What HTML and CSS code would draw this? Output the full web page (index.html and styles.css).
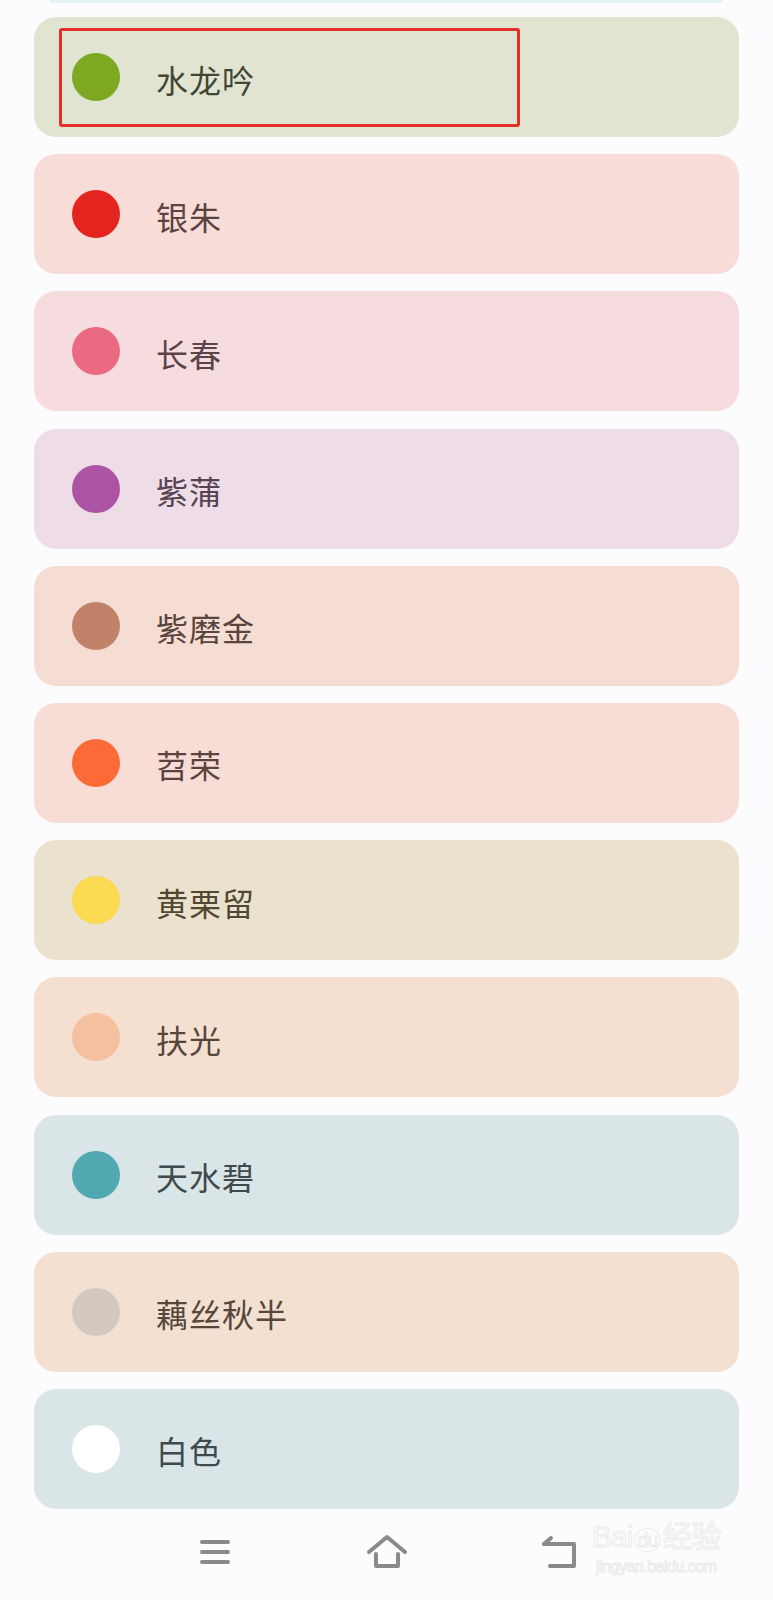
FILE: index.html
```html
<!DOCTYPE html>
<html lang="zh-CN">
<head>
    <meta charset="UTF-8">
    <meta name="viewport" content="width=device-width, initial-scale=1.0">
    <title>颜色列表</title>
    <link rel="stylesheet" href="styles.css">
</head>
<body>
    <div class="prev-edge"></div>

    <div class="list">
        <div class="item c-shuilongyin">
            <span class="dot"></span>
            <span class="name">水龙吟</span>
            <div class="highlight"></div>
        </div>
        <div class="item c-yinzhu">
            <span class="dot"></span>
            <span class="name">银朱</span>
        </div>
        <div class="item c-changchun">
            <span class="dot"></span>
            <span class="name">长春</span>
        </div>
        <div class="item c-zipu">
            <span class="dot"></span>
            <span class="name">紫蒲</span>
        </div>
        <div class="item c-zimojin">
            <span class="dot"></span>
            <span class="name">紫磨金</span>
        </div>
        <div class="item c-tiaorong">
            <span class="dot"></span>
            <span class="name">苕荣</span>
        </div>
        <div class="item c-huangliliu">
            <span class="dot"></span>
            <span class="name">黄栗留</span>
        </div>
        <div class="item c-fuguang">
            <span class="dot"></span>
            <span class="name">扶光</span>
        </div>
        <div class="item c-tianshuibi">
            <span class="dot"></span>
            <span class="name">天水碧</span>
        </div>
        <div class="item c-ousiqiuban">
            <span class="dot"></span>
            <span class="name">藕丝秋半</span>
        </div>
        <div class="item c-white">
            <span class="dot"></span>
            <span class="name">白色</span>
        </div>
    </div>

    <div class="navbar">
        <div class="nav-btn">
            <svg width="32" height="28" viewBox="0 0 32 28">
                <path d="M3 4 H29 M3 14 H29 M3 24 H29" fill="none" stroke="#8a8a8c" stroke-width="4" stroke-linecap="round"/>
            </svg>
        </div>
        <div class="nav-btn">
            <svg width="42" height="36" viewBox="0 0 42 36">
                <path d="M3 18 L21 3 L39 18" fill="none" stroke="#8a8a8c" stroke-width="4" stroke-linecap="round" stroke-linejoin="round"/>
                <path d="M10 20 V32 H32 V20" fill="none" stroke="#8a8a8c" stroke-width="4" stroke-linecap="round" stroke-linejoin="round"/>
            </svg>
        </div>
        <div class="nav-btn">
            <svg width="38" height="34" viewBox="0 0 38 34">
                <path d="M4 9 H34 V31 H10" fill="none" stroke="#8a8a8c" stroke-width="4" stroke-linecap="round" stroke-linejoin="round"/>
                <path d="M4 9 L11 3" fill="none" stroke="#8a8a8c" stroke-width="4" stroke-linecap="round"/>
            </svg>
        </div>
        <div class="watermark">
            <div class="wm-logo">Bai<span class="wm-paw">du</span>经验</div>
            <div class="wm-url">jingyan.baidu.com</div>
        </div>
    </div>
</body>
</html>
```

FILE: styles.css
```css
body {
    margin: 0;
    background: #fcfcfe;
    font-family: "Noto Sans CJK SC", "Noto Sans", sans-serif;
    height: 1600px;
    overflow: hidden;
}
.prev-edge {
    height: 3px;
    margin: 0 50px;
    background: #e3f2f2;
    border-radius: 0 0 12px 12px;
}
.list {
    display: flex;
    flex-direction: column;
    gap: 17.2px;
    padding: 14px 34px 0;
}
.item {
    position: relative;
    display: flex;
    align-items: center;
    height: 120px;
    padding-left: 38px;
    border-radius: 22px;
}
.dot {
    width: 48px;
    height: 48px;
    border-radius: 50%;
    flex-shrink: 0;
}
.name {
    margin-left: 36px;
    font-size: 32px;
    line-height: 1;
    padding-top: 3px;
    letter-spacing: 1px;
}
.highlight {
    position: absolute;
    left: 25px;
    top: 11px;
    width: 455px;
    height: 93px;
    border: 3px solid #e5302a;
    border-radius: 3px;
}

.c-shuilongyin { background: #e2e4d2; }
.c-shuilongyin .dot { background: #7da821; }
.c-shuilongyin .name { color: #434633; }

.c-yinzhu { background: #f8dcd8; }
.c-yinzhu .dot { background: #e3241f; }
.c-yinzhu .name { color: #5b4340; }

.c-changchun { background: #f6dcde; }
.c-changchun .dot { background: #ea6a82; }
.c-changchun .name { color: #5b4448; }

.c-zipu { background: #eedde7; }
.c-zipu .dot { background: #ad53a4; }
.c-zipu .name { color: #574453; }

.c-zimojin { background: #f6ddd4; }
.c-zimojin .dot { background: #c0836a; }
.c-zimojin .name { color: #5a443c; }

.c-tiaorong { background: #f7ddd6; }
.c-tiaorong .dot { background: #fc6b37; }
.c-tiaorong .name { color: #5b443d; }

.c-huangliliu { background: #ebe2cd; }
.c-huangliliu .dot { background: #fcda51; }
.c-huangliliu .name { color: #514733; }

.c-fuguang { background: #f4dfd1; }
.c-fuguang .dot { background: #f5c09f; }
.c-fuguang .name { color: #57453a; }

.c-tianshuibi { background: #d9e5e6; }
.c-tianshuibi .dot { background: #51a8b0; }
.c-tianshuibi .name { color: #3e4a4d; }

.c-ousiqiuban { background: #f3e0d0; }
.c-ousiqiuban .dot { background: #d3c9c0; }
.c-ousiqiuban .name { color: #57473b; }

.c-white { background: #d9e5e6; }
.c-white .dot { background: #ffffff; }
.c-white .name { color: #3e4a4d; }

.navbar {
    position: relative;
    display: flex;
    justify-content: center;
    align-items: center;
    height: 86px;
}
.nav-btn {
    width: 172px;
    display: flex;
    justify-content: center;
    align-items: center;
}
.watermark {
    position: absolute;
    left: 592px;
    top: 10px;
    color: transparent;
    -webkit-text-stroke: 1px #ebebed;
    font-family: "Liberation Sans", "Noto Sans CJK SC", sans-serif;
}
.wm-logo {
    font-size: 30px;
    line-height: 36px;
    letter-spacing: -1px;
}
.wm-paw {
    font-size: 20px;
    border: 1px solid #ebebed;
    border-radius: 50%;
    padding: 0 2px;
    margin: 0 2px;
}
.wm-url {
    font-size: 16px;
    line-height: 18px;
    letter-spacing: -0.5px;
    margin-left: 4px;
}
```
